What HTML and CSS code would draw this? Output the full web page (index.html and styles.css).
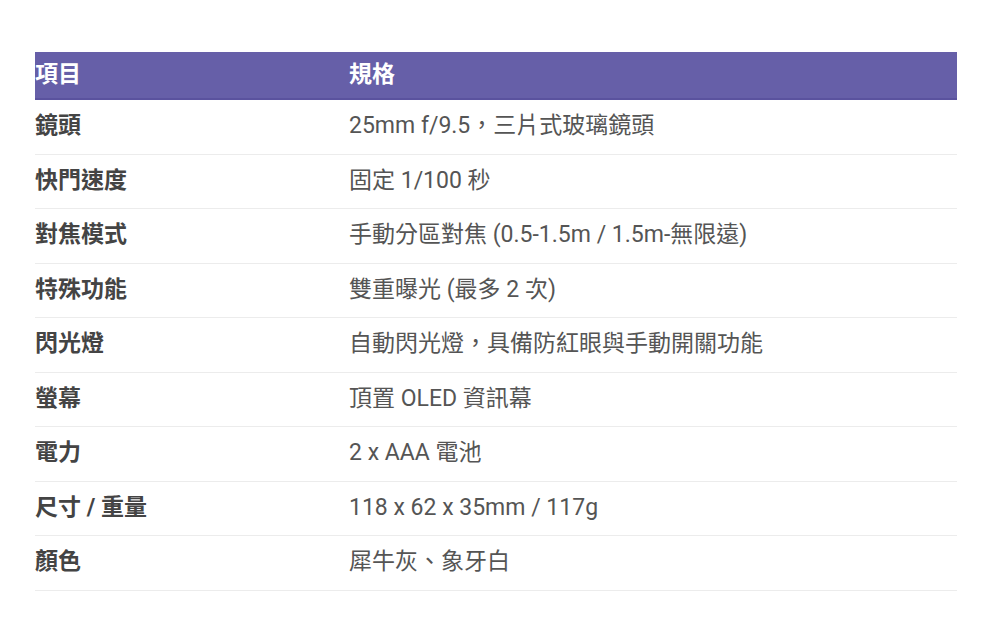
FILE: index.html
```html
<!DOCTYPE html>
<html lang="zh-Hant">
<head>
<meta charset="utf-8">
<link rel="stylesheet" href="styles.css">
</head>
<body>
<main class="page">
  <table class="spec">
    <thead>
      <tr><th class="col-item">項目</th><th>規格</th></tr>
    </thead>
    <tbody>
      <tr><td class="key">鏡頭</td><td>25mm f/9.5，三片式玻璃鏡頭</td></tr>
      <tr><td class="key">快門速度</td><td>固定 1/100 秒</td></tr>
      <tr><td class="key">對焦模式</td><td>手動分區對焦 (0.5-1.5m / 1.5m-無限遠)</td></tr>
      <tr><td class="key">特殊功能</td><td>雙重曝光 (最多 2 次)</td></tr>
      <tr><td class="key">閃光燈</td><td>自動閃光燈，具備防紅眼與手動開關功能</td></tr>
      <tr><td class="key">螢幕</td><td>頂置 OLED 資訊幕</td></tr>
      <tr><td class="key">電力</td><td>2 x AAA 電池</td></tr>
      <tr><td class="key">尺寸 / 重量</td><td>118 x 62 x 35mm / 117g</td></tr>
      <tr><td class="key">顏色</td><td>犀牛灰、象牙白</td></tr>
    </tbody>
  </table>
</main>
</body>
</html>
```

FILE: styles.css
```css
html, body {
  margin: 0;
  padding: 0;
  background: #ffffff;
}

.page {
  padding: 52px 33px 0 35px;
  font-family: Roboto, "Noto Sans CJK TC", "Noto Sans", sans-serif;
  font-size: 23px;
}

.spec {
  width: 922px;
  border-collapse: collapse;
}

.spec th {
  background: #665fa8;
  color: #ffffff;
  font-weight: 700;
  text-align: left;
  height: 46px;
  padding: 0;
  line-height: 26px;
  border-bottom: 2px solid #5a529e;
  vertical-align: middle;
}

.spec th.col-item {
  width: 314px;
}

.spec td {
  color: #555555;
  padding: 0 0 1px 0;
  height: 52.5px;
  line-height: 26px;
  border-bottom: 1px solid #ececec;
  vertical-align: middle;
}

.spec td.key {
  color: #444444;
  font-weight: 700;
}
```
